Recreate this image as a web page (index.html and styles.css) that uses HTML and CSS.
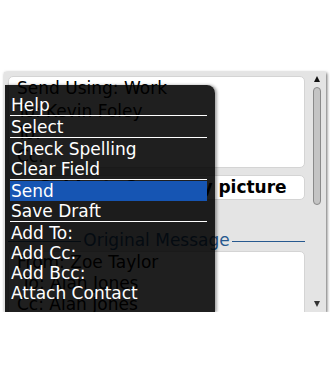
FILE: index.html
```html
<!DOCTYPE html>
<html>
<head>
<meta charset="utf-8">
<link rel="stylesheet" href="styles.css">
</head>
<body>
<div class="screen">
  <div class="content">
    <div class="field f1">
      <div>Send Using: Work</div>
      <div>To: Kevin Foley</div>
      <div>To:</div>
      <div>Cc:</div>
    </div>
    <div class="field f2"><span class="subj">Subject: Company picture</span></div>
    <div class="orig"><span class="rule"></span><span class="orig-text">Original Message</span><span class="rule"></span></div>
    <div class="field f3">
      <div>From: Zoe Taylor</div>
      <div class="indent">To: Alan Jones</div>
      <div>Cc: Alan Jones</div>
    </div>
  </div>
  <div class="scroll">
    <span class="arrow up"></span>
    <span class="thumb"></span>
    <span class="spacer"></span>
    <span class="arrow down"></span>
  </div>
  <div class="menu">
    <div class="item">Help</div>
    <div class="sep"></div>
    <div class="item">Select</div>
    <div class="sep"></div>
    <div class="item">Check Spelling</div>
    <div class="item">Clear Field</div>
    <div class="sep"></div>
    <div class="item selected">Send</div>
    <div class="item">Save Draft</div>
    <div class="sep"></div>
    <div class="item">Add To:</div>
    <div class="item">Add Cc:</div>
    <div class="item">Add Bcc:</div>
    <div class="item">Attach Contact</div>
  </div>
</div>
</body>
</html>
```
FILE: styles.css
```css
body {
  margin: 0;
  background: #fff;
  font-family: "DejaVu Sans", sans-serif;
  font-size: 17px;
  color: #000;
}
.screen {
  position: relative;
  margin: 72px 0 0 4px;
  width: 322px;
  height: 240px;
  background: #e4e4e4;
  overflow: hidden;
  display: flex;
  box-shadow: 1px 1px 3px rgba(0, 0, 0, 0.6);
}
.content {
  width: 297px;
  margin-left: 4px;
  padding-top: 4px;
  display: flex;
  flex-direction: column;
  flex-shrink: 0;
}
.field {
  background: #fff;
  border: 1px solid #d4d4d4;
  border-radius: 5px;
  box-sizing: border-box;
  flex-shrink: 0;
}
.f1 {
  height: 92px;
  padding-left: 8px;
  line-height: 22.5px;
}
.f2 {
  height: 25px;
  margin-top: 7px;
  line-height: 23px;
  padding-left: 30px;
  font-weight: bold;
  white-space: nowrap;
  overflow: hidden;
}
.orig {
  margin-top: 30px;
  height: 22px;
  line-height: 20px;
  display: flex;
  color: #27598f;
}
.orig .rule {
  flex: 1;
  height: 1px;
  background: #27598f;
  margin-top: 11px;
}
.orig-text {
  padding: 0 2px;
}
.f3 {
  height: 80px;
  margin-top: 1px;
  padding: 0 0 0 8px;
  line-height: 21px;
}
.f3 .indent {
  padding-left: 4px;
}
.scroll {
  margin-left: 8px;
  width: 8px;
  display: flex;
  flex-direction: column;
  align-items: center;
  padding: 4px 0 5px;
  box-sizing: border-box;
}
.arrow {
  width: 0;
  height: 0;
  border-left: 3.5px solid transparent;
  border-right: 3.5px solid transparent;
}
.arrow.up {
  border-bottom: 6px solid #111;
}
.arrow.down {
  border-top: 6px solid #333;
}
.thumb {
  margin-top: 5px;
  width: 8px;
  height: 118px;
  box-sizing: border-box;
  border: 1px solid #8a8a8a;
  border-radius: 4px;
  background: #c4c4c4;
}
.spacer {
  flex: 1;
}
.menu {
  position: absolute;
  left: 1px;
  top: 13px;
  bottom: 0;
  width: 210px;
  box-sizing: border-box;
  padding: 10px 8px 0 5px;
  background: rgba(0, 0, 0, 0.88);
  border-top-right-radius: 8px;
  box-shadow: 2px 0 3px rgba(0, 0, 0, 0.35);
  color: #fff;
}
.item {
  height: 20px;
  line-height: 20px;
  padding-left: 1px;
  white-space: nowrap;
}
.item.selected {
  background: #1655b3;
}
.sep {
  height: 1px;
  background: #fff;
  margin-bottom: 1px;
}
.sep + .item {
  margin-top: 1px;
}
```
